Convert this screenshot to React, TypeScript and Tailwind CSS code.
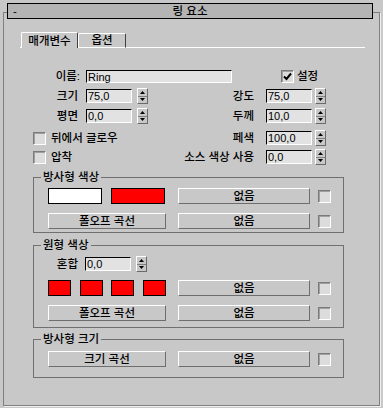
import type { ReactNode } from "react"

function Spinner() {
  return (
    <div className="flex h-[16px] w-[11px] shrink-0 flex-col border border-t-white border-l-white border-b-[#6a6a6a] border-r-[#6a6a6a] bg-[#c8c8c8]">
      <div className="flex flex-1 items-center justify-center border-b border-b-[#808080]">
        <svg width="5" height="3" viewBox="0 0 5 3">
          <path d="M2.5 0L5 3H0z" fill="#000" />
        </svg>
      </div>
      <div className="flex flex-1 items-center justify-center">
        <svg width="5" height="3" viewBox="0 0 5 3">
          <path d="M0 0H5L2.5 3z" fill="#000" />
        </svg>
      </div>
    </div>
  )
}

function Field({ value }: { value: string }) {
  return (
    <div className="h-[14px] w-[46px] shrink-0 border border-t-black border-l-black border-b-white border-r-white bg-[#e2e2e2] pl-[1px] text-[11px] font-normal leading-[12px]">
      {value}
    </div>
  )
}

function Check({ checked = false }: { checked?: boolean }) {
  return (
    <div className="flex h-[13px] w-[13px] shrink-0 items-center justify-center border border-t-[#7a7a7a] border-l-[#7a7a7a] border-b-white border-r-white bg-[#dcdcdc] shadow-[inset_1px_1px_0_#a0a0a0]">
      {checked && (
        <svg width="9" height="9" viewBox="0 0 9 9">
          <path d="M1 4.5L3.5 7L8 1.5" stroke="#000" strokeWidth="2" fill="none" />
        </svg>
      )}
    </div>
  )
}

function Btn({ children, w }: { children: ReactNode; w: string }) {
  return (
    <div className={`flex h-[16px] shrink-0 items-center justify-center border border-t-white border-l-white border-b-[#6e6e6e] border-r-[#6e6e6e] bg-[#c8c8c8] leading-[14px] ${w}`}>
      {children}
    </div>
  )
}

function Group({ title, h, children }: { title: string; h: string; children: ReactNode }) {
  return (
    <div className={`relative ml-[29px] w-[311px] border border-[#707070] ${h}`}>
      <span className="absolute -top-[8px] left-[7px] bg-[#c8c8c8] px-[2px] leading-[14px]">{title}</span>
      {children}
    </div>
  )
}

export default function App() {
  return (
    <div className="h-[408px] w-[383px] overflow-hidden bg-[#c8c8c8] pt-[3px] font-['Liberation_Sans','Noto_Sans_CJK_KR',sans-serif] text-[11.5px] font-medium text-black">
      {/* rollout title */}
      <div className="relative z-10 ml-[7px] flex h-[16px] w-[366px] items-center border border-black bg-[#b4b4b4]">
        <span className="ml-[5px] w-[10px] leading-[12px]">-</span>
        <span className="flex-1 pr-[15px] text-center leading-[14px]">링 요소</span>
      </div>

      <div className="-mt-[7px] ml-[3px] h-[394px] w-[377px] border border-[#808080] shadow-[1px_1px_0_#f0f0f0]">
        {/* tabs */}
        <div className="ml-[16px] mt-[19px] flex h-[16px] w-[345px] items-end">
          <div className="h-full w-[1px] border-b border-white" />
          <div className="flex h-[16px] w-[57px] items-center justify-center rounded-t-[2px] border border-b-0 border-t-white border-l-white border-r-[#404040] leading-[14px]">
            매개변수
          </div>
          <div className="flex h-[15px] w-[48px] items-center justify-center rounded-t-[2px] border border-t-white border-l-white border-r-[#404040] border-b-white leading-[13px]">
            옵션
          </div>
          <div className="h-full flex-1 border-b border-white" />
        </div>

        {/* name row */}
        <div className="mt-[21px] flex h-[14px] items-center">
          <div className="w-[76px] text-right leading-[14px]">이름:</div>
          <div className="ml-[6px] h-[13px] w-[146px] border border-t-black border-l-black border-b-white border-r-white bg-[#e2e2e2] pl-[1px] text-[11px] font-normal leading-[12px]">
            Ring
          </div>
          <div className="ml-[49px]">
            <Check checked />
          </div>
          <span className="ml-[3px] leading-[14px]">설정</span>
        </div>

        <div className="mt-[6px] flex h-[14px] items-center">
          <div className="w-[74px] text-right leading-[14px]">크기</div>
          <div className="ml-[8px]"><Field value="75,0" /></div>
          <div className="ml-[5px]"><Spinner /></div>
          <div className="w-[106px] text-right leading-[14px]">강도</div>
          <div className="ml-[12px]"><Field value="75,0" /></div>
          <div className="ml-[3px]"><Spinner /></div>
        </div>

        <div className="mt-[6px] flex h-[14px] items-center">
          <div className="w-[74px] text-right leading-[14px]">평면</div>
          <div className="ml-[8px]"><Field value="0,0" /></div>
          <div className="ml-[5px]"><Spinner /></div>
          <div className="w-[106px] text-right leading-[14px]">두께</div>
          <div className="ml-[12px]"><Field value="10,0" /></div>
          <div className="ml-[3px]"><Spinner /></div>
        </div>

        <div className="mt-[8px] flex h-[14px] items-center">
          <div className="flex w-[144px] items-center">
            <div className="ml-[29px]"><Check /></div>
            <span className="ml-[5px] leading-[14px]">뒤에서 글로우</span>
          </div>
          <div className="w-[106px] text-right leading-[14px]">페색</div>
          <div className="ml-[12px]"><Field value="100,0" /></div>
          <div className="ml-[3px]"><Spinner /></div>
        </div>

        <div className="mt-[5px] flex h-[14px] items-center">
          <div className="flex w-[144px] items-center">
            <div className="ml-[29px]"><Check /></div>
            <span className="ml-[5px] leading-[14px]">압착</span>
          </div>
          <div className="w-[106px] text-right leading-[14px]">소스 색상 사용</div>
          <div className="ml-[12px]"><Field value="0,0" /></div>
          <div className="ml-[3px]"><Spinner /></div>
        </div>

        {/* radial colour */}
        <div className="mt-[13px]">
          <Group title="방사형 색상" h="h-[56px]">
            <div className="mt-[10px] flex h-[16px] items-center">
              <div className="ml-[14px] h-[16px] w-[54px] border border-black bg-white" />
              <div className="ml-[9px] h-[16px] w-[54px] border border-black bg-[#ff0000]" />
              <div className="ml-[13px]"><Btn w="w-[132px]">없음</Btn></div>
              <div className="ml-[8px]"><Check /></div>
            </div>
            <div className="mt-[9px] flex h-[16px] items-center">
              <div className="ml-[14px]"><Btn w="w-[118px]">폴오프 곡선</Btn></div>
              <div className="ml-[12px]"><Btn w="w-[132px]">없음</Btn></div>
              <div className="ml-[8px]"><Check /></div>
            </div>
          </Group>
        </div>

        {/* circular colour */}
        <div className="mt-[12px]">
          <Group title="원형 색상" h="h-[83px]">
            <div className="mt-[11px] flex h-[14px] items-center">
              <div className="w-[44px] text-right leading-[14px]">혼합</div>
              <div className="ml-[7px]"><Field value="0,0" /></div>
              <div className="ml-[5px]"><Spinner /></div>
            </div>
            <div className="mt-[9px] flex h-[16px] items-center">
              <div className="ml-[14px] h-[16px] w-[23px] border border-black bg-[#ff0000]" />
              <div className="ml-[9px] h-[16px] w-[23px] border border-black bg-[#ff0000]" />
              <div className="ml-[8px] h-[16px] w-[23px] border border-black bg-[#ff0000]" />
              <div className="ml-[9px] h-[16px] w-[23px] border border-black bg-[#ff0000]" />
              <div className="ml-[12px]"><Btn w="w-[132px]">없음</Btn></div>
              <div className="ml-[8px]"><Check /></div>
            </div>
            <div className="mt-[9px] flex h-[16px] items-center">
              <div className="ml-[14px]"><Btn w="w-[118px]">폴오프 곡선</Btn></div>
              <div className="ml-[12px]"><Btn w="w-[132px]">없음</Btn></div>
              <div className="ml-[8px]"><Check /></div>
            </div>
          </Group>
        </div>

        {/* radial size */}
        <div className="mt-[11px]">
          <Group title="방사형 크기" h="h-[39px]">
            <div className="mt-[11px] flex h-[16px] items-center">
              <div className="ml-[14px]"><Btn w="w-[118px]">크기 곡선</Btn></div>
              <div className="ml-[12px]"><Btn w="w-[132px]">없음</Btn></div>
              <div className="ml-[8px]"><Check /></div>
            </div>
          </Group>
        </div>
      </div>
    </div>
  )
}
